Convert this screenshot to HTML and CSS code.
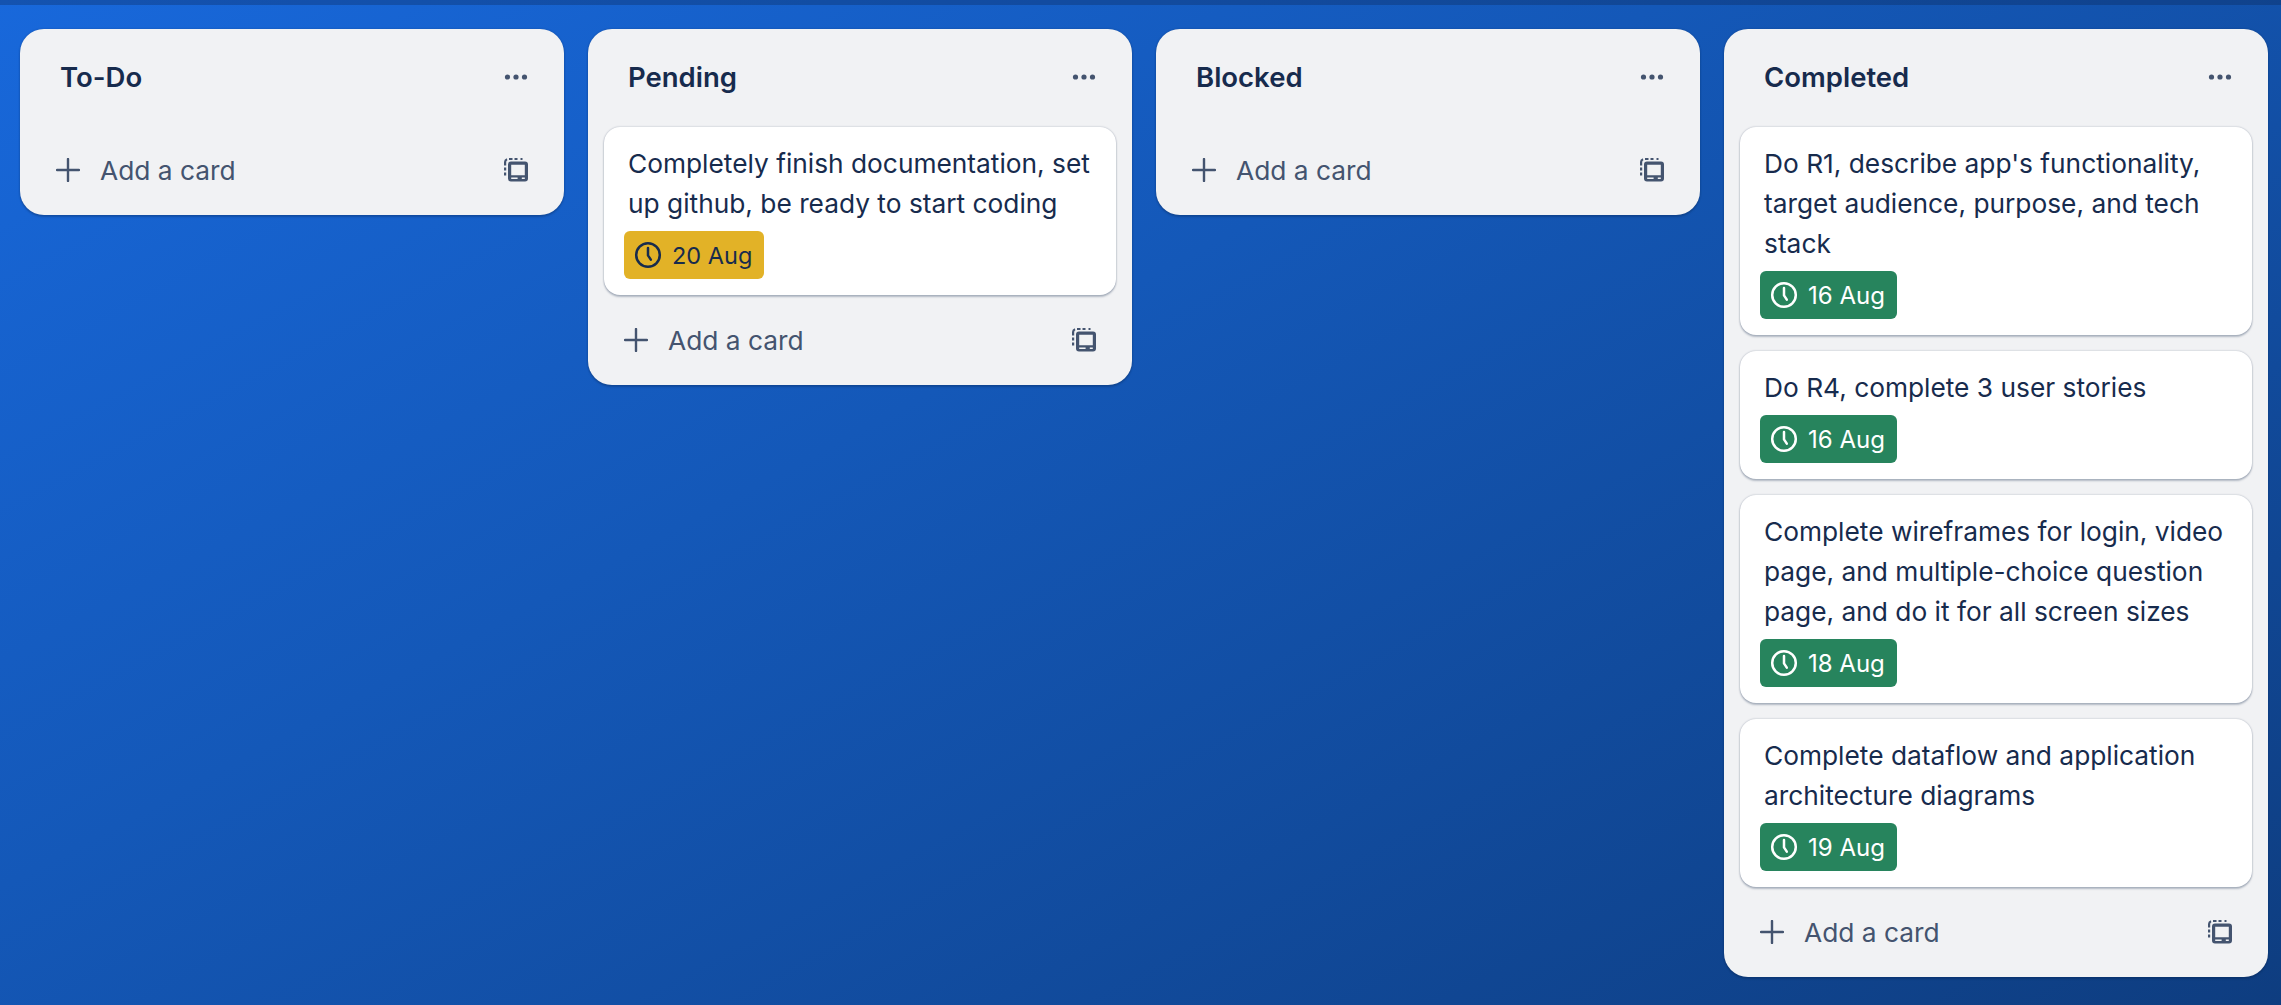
FILE: index.html
```html
<!DOCTYPE html>
<html lang="en">
<head>
  <meta charset="UTF-8">
  <meta name="viewport" content="width=device-width, initial-scale=1.0">
  <title>Board</title>
  <link rel="stylesheet" href="styles.css">
</head>
<body>
  <svg class="sprites" width="0" height="0" aria-hidden="true">
    <symbol id="icon-plus" viewBox="0 0 24 24">
      <path d="M12 1v22M1 12h22" fill="none" stroke="currentColor" stroke-width="2.4" stroke-linecap="round"/>
    </symbol>
    <symbol id="icon-more" viewBox="0 0 24 24">
      <circle cx="3.5" cy="12" r="2.6" fill="currentColor"/>
      <circle cx="12" cy="12" r="2.6" fill="currentColor"/>
      <circle cx="20.5" cy="12" r="2.6" fill="currentColor"/>
    </symbol>
    <symbol id="icon-template" viewBox="0 0 24 24">
      <path d="M1.1 17.5V4a3 3 0 0 1 3-3H21" fill="none" stroke="currentColor" stroke-width="2.2" stroke-dasharray="3 2 3 2 7 2 3.500 2 3"/>
      <path fill="currentColor" fill-rule="evenodd" d="M7 3.500h14a3 3 0 0 1 3 3v14a3 3 0 0 1-3 3H7a3 3 0 0 1-3-3v-14a3 3 0 0 1 3-3zm.2 3.300v10.400h13.600V6.800zm0 12.800v1.500h6.400v-1.500zm10.600 0v1.500h3v-1.500z"/>
    </symbol>
    <symbol id="icon-clock" viewBox="0 0 32 32">
      <circle cx="16" cy="16" r="11.800" fill="none" stroke="currentColor" stroke-width="2.500"/>
      <path d="M16 9v7.400l2.800 4.200" fill="none" stroke="currentColor" stroke-width="2.500" stroke-linecap="round" stroke-linejoin="round"/>
    </symbol>
  </svg>

  <div class="topbar"></div>

  <div class="board">
    <!-- To-Do -->
    <section class="list">
      <div class="list-header">
        <h2>To-Do</h2>
        <svg class="icon more"><use href="#icon-more"/></svg>
      </div>
      <div class="list-footer">
        <svg class="icon"><use href="#icon-plus"/></svg>
        <span class="add-label">Add a card</span>
        <svg class="icon template"><use href="#icon-template"/></svg>
      </div>
    </section>

    <!-- Pending -->
    <section class="list">
      <div class="list-header">
        <h2>Pending</h2>
        <svg class="icon more"><use href="#icon-more"/></svg>
      </div>
      <div class="cards">
        <article class="card">
          <p>Completely finish documentation, set up github, be ready to start coding</p>
          <span class="due due-soon"><svg class="clock"><use href="#icon-clock"/></svg>20 Aug</span>
        </article>
      </div>
      <div class="list-footer">
        <svg class="icon"><use href="#icon-plus"/></svg>
        <span class="add-label">Add a card</span>
        <svg class="icon template"><use href="#icon-template"/></svg>
      </div>
    </section>

    <!-- Blocked -->
    <section class="list">
      <div class="list-header">
        <h2>Blocked</h2>
        <svg class="icon more"><use href="#icon-more"/></svg>
      </div>
      <div class="list-footer">
        <svg class="icon"><use href="#icon-plus"/></svg>
        <span class="add-label">Add a card</span>
        <svg class="icon template"><use href="#icon-template"/></svg>
      </div>
    </section>

    <!-- Completed -->
    <section class="list">
      <div class="list-header">
        <h2>Completed</h2>
        <svg class="icon more"><use href="#icon-more"/></svg>
      </div>
      <div class="cards">
        <article class="card">
          <p>Do R1, describe app's functionality, target audience, purpose, and tech stack</p>
          <span class="due due-done"><svg class="clock"><use href="#icon-clock"/></svg>16 Aug</span>
        </article>
        <article class="card">
          <p>Do R4, complete 3 user stories</p>
          <span class="due due-done"><svg class="clock"><use href="#icon-clock"/></svg>16 Aug</span>
        </article>
        <article class="card">
          <p>Complete wireframes for login, video page, and multiple-choice question page, and do it for all screen sizes</p>
          <span class="due due-done"><svg class="clock"><use href="#icon-clock"/></svg>18 Aug</span>
        </article>
        <article class="card">
          <p>Complete dataflow and application architecture diagrams</p>
          <span class="due due-done"><svg class="clock"><use href="#icon-clock"/></svg>19 Aug</span>
        </article>
      </div>
      <div class="list-footer">
        <svg class="icon"><use href="#icon-plus"/></svg>
        <span class="add-label">Add a card</span>
        <svg class="icon template"><use href="#icon-template"/></svg>
      </div>
    </section>
  </div>
</body>
</html>
```

FILE: styles.css
```css
html,
body {
  height: 100%;
}

body {
  margin: 0;
  font-family: 'Inter', 'Liberation Sans', sans-serif;
  color: #172b4d;
  background: linear-gradient(152deg, #1868db 0%, #1458b8 40%, #0e3d80 100%);
  overflow: hidden;
}

.sprites {
  position: absolute;
}

.topbar {
  height: 5px;
  background: rgba(9, 30, 66, 0.28);
}

.board {
  display: flex;
  align-items: flex-start;
  gap: 24px;
  padding: 24px 20px 0;
}

.list {
  flex: 0 0 544px;
  background: #f1f2f4;
  border-radius: 24px;
  box-shadow: 0 2px 2px rgba(9, 30, 66, 0.25), 0 0 2px rgba(9, 30, 66, 0.31);
}

.list-header {
  display: flex;
  justify-content: space-between;
  align-items: center;
  height: 96px;
  padding: 0 36px 0 40px;
  box-sizing: border-box;
}

.list-header h2 {
  margin: 0;
  font-size: 27.5px;
  font-weight: 600;
  line-height: 48px;
}

.cards {
  display: flex;
  flex-direction: column;
  gap: 16px;
  padding: 2px 16px 0;
}

.card {
  padding: 16px 20px;
  background: #fff;
  border-radius: 16px;
  box-shadow: 0 2px 2px rgba(9, 30, 66, 0.25), 0 0 2px rgba(9, 30, 66, 0.31);
}

.card p {
  margin: 0 0 7px;
  padding: 1px 0 0 4px;
  font-size: 26.3px;
  line-height: 40px;
}

.due {
  display: flex;
  align-items: center;
  width: fit-content;
  height: 48px;
  padding: 0 12px 0 8px;
  border-radius: 6px;
  font-size: 23.5px;
  box-sizing: border-box;
}

.due-soon {
  background: #e2b227;
  color: #172b4d;
}

.due-done {
  background: #27845d;
  color: #fff;
  font-size: 24px;
}

.clock {
  width: 32px;
  height: 32px;
  margin-right: 8px;
  color: inherit;
}

.list-footer {
  display: flex;
  align-items: center;
  height: 90px;
  padding: 0 36px;
  box-sizing: border-box;
  color: #44546f;
}

.icon {
  flex: none;
  width: 24px;
  height: 24px;
  color: #44546f;
}

.add-label {
  margin-left: 20px;
  font-size: 26.3px;
}

.template {
  margin-left: auto;
}
```
